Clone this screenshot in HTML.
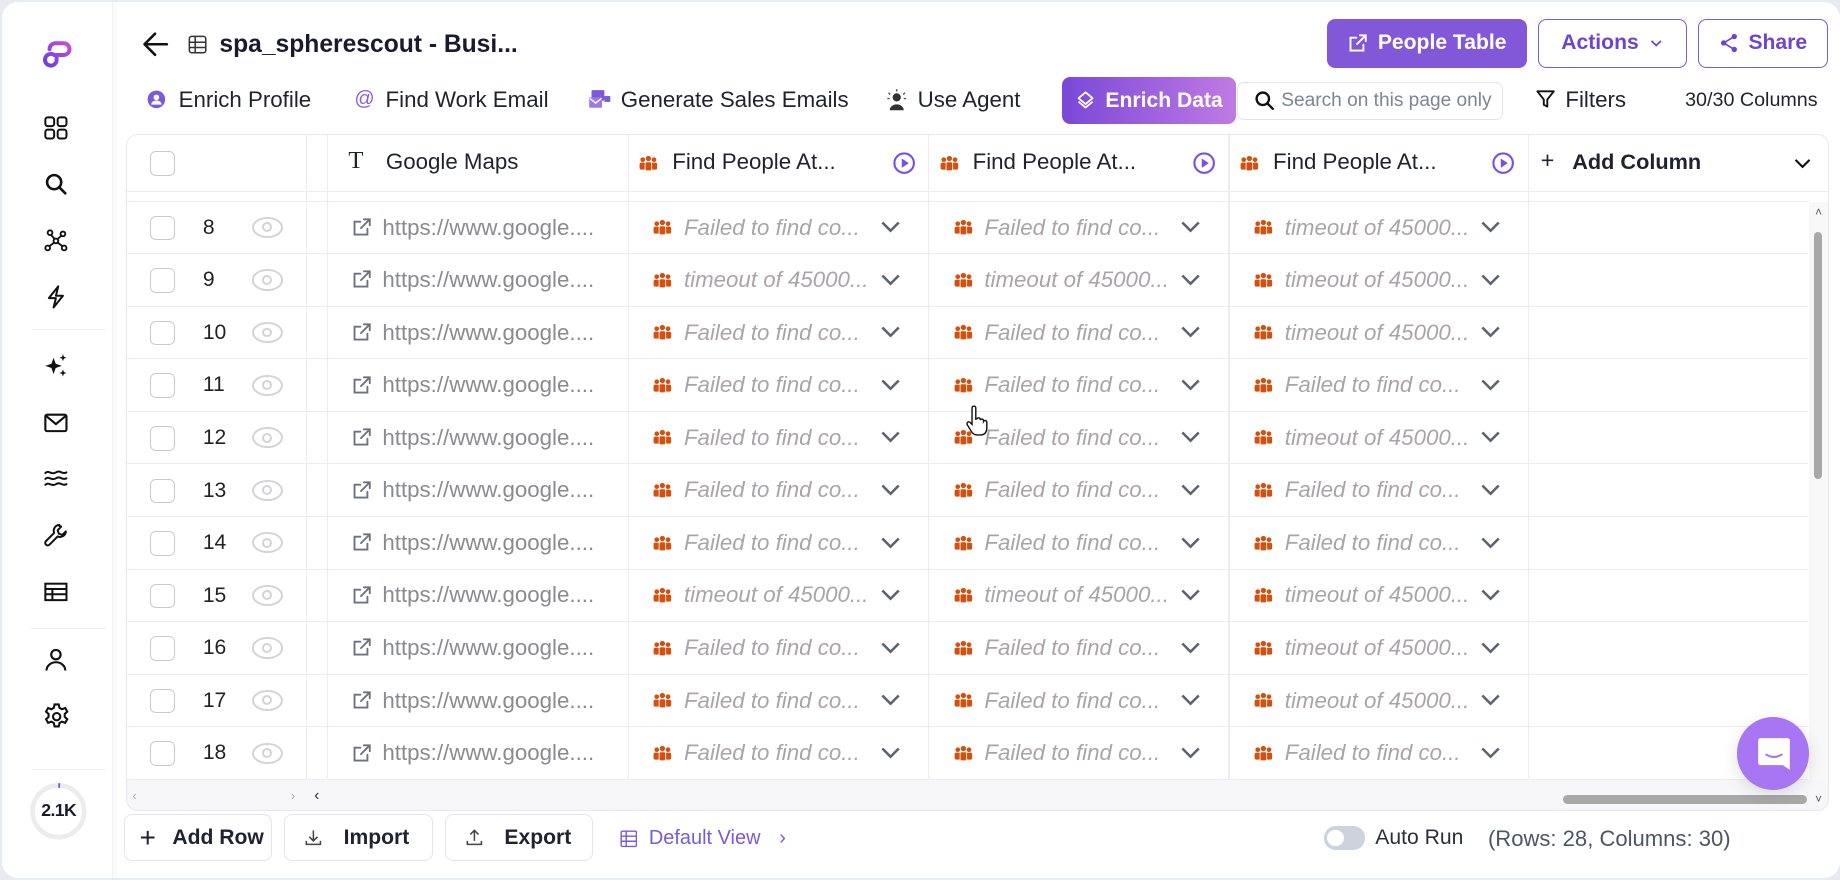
<!DOCTYPE html>
<html><head><meta charset="utf-8"><style>
html{zoom:1.173469}
*{box-sizing:border-box;margin:0;padding:0}
body{width:1568px;height:750px;overflow:hidden;background:#e6ebf2;font-family:"Liberation Sans",sans-serif;color:#1a1a2e;position:relative}
.card{position:absolute;left:2px;top:2px;width:1566px;height:746px;background:#fff;border-radius:14px;overflow:hidden}
.side{position:absolute;left:0;top:0;width:94px;height:760px;background:#fff;box-shadow:2px 0 6px rgba(0,0,0,.04);border-right:1px solid #f1f2f5}
.a{position:absolute}
.si{position:absolute;left:35px;width:22px;height:22px}
.sep{position:absolute;left:24px;width:64px;height:1px;background:#eef0f3}
.btn{position:absolute;border-radius:7px;font-size:18px;font-weight:bold;display:flex;align-items:center;justify-content:center;gap:8px}
.tb{position:absolute;top:72px;font-size:19px;color:#1f2330;display:flex;align-items:center;gap:8px}
.tbl{position:absolute;left:105px;top:112px;width:1452px;height:577px;border:1px solid #e6e6f4;border-radius:10px;overflow:hidden;background:#fff}
.vl{position:absolute;top:0;width:1px;height:550px;background:#ececf8}
.row{position:relative;width:1433px;height:44.8px;border-bottom:1px solid #ececf8}
.cb{position:absolute;left:20px;top:12px;width:21px;height:21px;border:1.5px solid #c9c9cf;border-radius:5px;background:#fff}
.num{position:absolute;left:65px;top:12px;font-size:18px;color:#222}
.eye{position:absolute;left:107px;top:13px;width:26px;height:18px;border:2px solid #d4d4d8;border-radius:50%/50%}
.eye:after{content:"";position:absolute;left:7px;top:3px;width:5px;height:5px;border:2px solid #d4d4d8;border-radius:50%}
.lk{position:absolute;left:191px;top:13px;width:18px;height:18px}
.url{position:absolute;left:218px;top:11px;font-size:19px;color:#8a8a92}
.pi{position:absolute;top:15px;width:16px;height:14px}
.ct{position:absolute;top:11px;font-size:19px;color:#aaa4a8;font-style:italic;white-space:nowrap}
.ch{position:absolute;top:15px;width:18px;height:14px}
.c1{left:449px}.c2{left:705px}.c3{left:961px}
.t1{left:475px}.t2{left:731px}.t3{left:987px}
.h1{left:642px}.h2{left:898px}.h3{left:1153px}
.hd{position:absolute;top:12px;font-size:19px;color:#1f2330}
.fb{position:absolute;top:692px;height:40px;border:1px solid #e4e4ee;border-radius:7px;font-size:18px;font-weight:bold;color:#1f2330;display:flex;align-items:center;gap:14px;padding-left:12px}
</style></head><body>
<svg width="0" height="0" style="position:absolute"><defs>
<symbol id="ppl" viewBox="0 0 16 14"><g fill="#d4500f"><circle cx="3.2" cy="4" r="2"/><circle cx="12.8" cy="4" r="2"/><circle cx="8" cy="3" r="2.3"/><rect x="0.5" y="6.5" width="5" height="6" rx="1.5"/><rect x="10.5" y="6.5" width="5" height="6" rx="1.5"/><rect x="5.2" y="5.8" width="5.6" height="7.7" rx="1.5" stroke="#fff" stroke-width="0.7"/></g></symbol>
<symbol id="chv" viewBox="0 0 18 14"><path d="M2 3l7 7 7-7" fill="none" stroke="#5b6270" stroke-width="2.2"/></symbol>
<symbol id="lnk" viewBox="0 0 18 18"><path d="M14 10v5H3V4h5M11 2h5v5M16 2L8.5 9.5" fill="none" stroke="#6b7280" stroke-width="1.6" stroke-linecap="round"/></symbol>
</defs></svg>
<div class="card">
<div class="side">
<svg class="a" style="left:31px;top:28px" width="32" height="32" viewBox="0 0 32 32"><defs><linearGradient id="lg" x1="0" y1="1" x2="1" y2="0"><stop offset="0" stop-color="#6a3de8"/><stop offset="1" stop-color="#c44fd8"/></linearGradient></defs><path d="M9 12 A5 5 0 0 1 14 7 H21 A5 5 0 0 1 21 17 H13 A5 5 0 1 0 15 22 L15 17" fill="none" stroke="url(#lg)" stroke-width="3.4" stroke-linecap="round"/></svg>
<svg class="si" style="top:96px" viewBox="0 0 22 22" fill="none" stroke="#111" stroke-width="1.7"><rect x="2" y="2" width="7.5" height="7.5" rx="2"/><rect x="12.5" y="2" width="7.5" height="7.5" rx="2"/><rect x="2" y="12.5" width="7.5" height="7.5" rx="2"/><rect x="12.5" y="12.5" width="7.5" height="7.5" rx="2"/></svg>
<svg class="si" style="top:144px" viewBox="0 0 22 22" fill="none" stroke="#111" stroke-width="2.2" stroke-linecap="round"><circle cx="9.5" cy="9.5" r="6"/><path d="M14 14l5 5"/></svg>
<svg class="si" style="top:192px" viewBox="0 0 22 22" fill="none" stroke="#111" stroke-width="1.6"><circle cx="4" cy="17" r="2"/><circle cx="18" cy="17" r="2"/><circle cx="6" cy="4" r="2"/><circle cx="17" cy="5" r="2"/><circle cx="11" cy="11" r="2"/><path d="M5.5 15.5L9.5 12.5M12.5 12.5l4 3M7 6l3 3.5M15.5 6.5l-3 3"/></svg>
<svg class="si" style="top:240px" viewBox="0 0 22 22" fill="none" stroke="#111" stroke-width="1.7" stroke-linejoin="round"><path d="M13 2L5 12h6l-2 8 8-10h-6z"/></svg>
<div class="sep" style="top:278px"></div>
<svg class="si" style="top:299px" viewBox="0 0 22 22" fill="#111"><path d="M9 4l1.8 5.2L16 11l-5.2 1.8L9 18l-1.8-5.2L2 11l5.2-1.8z"/><path d="M17 1l.8 2.2L20 4l-2.2.8L17 7l-.8-2.2L14 4l2.2-.8z"/><path d="M17 14l.8 2.2 2.2.8-2.2.8L17 20l-.8-2.2-2.2-.8 2.2-.8z"/></svg>
<svg class="si" style="top:347px" viewBox="0 0 22 22" fill="none" stroke="#111" stroke-width="1.8"><rect x="2" y="4" width="18" height="14" rx="1.5"/><path d="M2.5 5l8.5 7 8.5-7"/></svg>
<svg class="si" style="top:395px" viewBox="0 0 22 22" fill="none" stroke="#111" stroke-width="1.7" stroke-linecap="round"><path d="M2 6c3-3 5 2 9-0.5s5 2 9 0M2 11c3-3 5 2 9-0.5s5 2 9 0M2 16c3-3 5 2 9-0.5s5 2 9 0"/></svg>
<svg class="si" style="top:443px" viewBox="0 0 22 22" fill="none" stroke="#111" stroke-width="1.7" stroke-linejoin="round"><path d="M14 2.5a5 5 0 0 0-4.5 6.8L2.5 16.3a2 2 0 0 0 3 3l7-7A5 5 0 0 0 19.5 8l-3 3-3-1-1-3 3-3a5 5 0 0 0-1.5-.5z"/></svg>
<svg class="si" style="top:491px" viewBox="0 0 22 22" fill="none" stroke="#111" stroke-width="1.7"><rect x="2" y="4" width="18" height="14"/><path d="M2 8.5h18M2 13h18M8 8.5v9.5"/></svg>
<div class="sep" style="top:533px"></div>
<svg class="si" style="top:549px" viewBox="0 0 22 22" fill="none" stroke="#111" stroke-width="1.8"><circle cx="11" cy="6.5" r="4"/><path d="M3 20a8 7 0 0 1 16 0"/></svg>
<svg class="a" style="left:34px;top:596px" width="25" height="25" viewBox="0 0 24 24" fill="none" stroke="#111" stroke-width="1.7"><circle cx="12" cy="12" r="3"/><path d="M10.3 2h3.4l.6 2.8 2 1.1 2.7-1 1.7 3-2.1 1.9v2.4l2.1 1.9-1.7 3-2.7-1-2 1.1-.6 2.8h-3.4l-.6-2.8-2-1.1-2.7 1-1.7-3 2.1-1.9v-2.4L3.3 7.9l1.7-3 2.7 1 2-1.1z"/></svg>
<div class="sep" style="top:653px"></div>
<svg class="a" style="left:23px;top:664px" width="50" height="50" viewBox="0 0 50 50"><circle cx="25" cy="25" r="22" fill="none" stroke="#ececec" stroke-width="4"/><path d="M25 3 a22 22 0 0 1 1.5 .05" stroke="#7a4fe0" stroke-width="4" fill="none"/></svg>
<div class="a" style="left:23px;top:680px;width:50px;text-align:center;font-size:15px;font-weight:bold;letter-spacing:-.5px">2.1K</div>
</div>

<svg class="a" style="left:118px;top:23px" width="26" height="26" viewBox="0 0 26 26" fill="none" stroke="#111" stroke-width="2.2" stroke-linecap="round" stroke-linejoin="round"><path d="M22 13H4M12 4l-9 9 9 9"/></svg>
<svg class="a" style="left:157px;top:27px" width="18" height="18" viewBox="0 0 18 18" fill="none" stroke="#333" stroke-width="1.3"><rect x="2" y="2" width="14" height="14" rx="2"/><path d="M2 7h14M2 11.5h14M7 2v14"/></svg>
<div class="a" style="left:185px;top:24px;font-size:21px;font-weight:bold;color:#1a1a2e">spa_spherescout - Busi...</div>

<div class="btn" style="left:1129px;top:14px;width:170px;height:42px;background:#8258d8;color:#fff"><svg width="18" height="18" viewBox="0 0 18 18" fill="none" stroke="#fff" stroke-width="1.6" stroke-linecap="round"><path d="M14 10v5H3V4h5M11 2h5v5M16 2L8.5 9.5"/></svg>People Table</div>
<div class="btn" style="left:1309px;top:14px;width:127px;height:42px;border:1.3px solid #8258d8;color:#6e44cc;background:#fff">Actions <svg width="14" height="14" viewBox="0 0 14 14" fill="none" stroke="#6e44cc" stroke-width="1.5"><path d="M3 5l4 4 4-4"/></svg></div>
<div class="btn" style="left:1445px;top:14px;width:111px;height:42px;border:1.3px solid #8258d8;color:#6e44cc;background:#fff"><svg width="17" height="17" viewBox="0 0 17 17" fill="#6e44cc"><circle cx="13" cy="3" r="2.3"/><circle cx="4" cy="8.5" r="2.3"/><circle cx="13" cy="14" r="2.3"/><path d="M13 3L4 8.5 13 14" stroke="#6e44cc" stroke-width="1.4" fill="none"/></svg>Share</div>

<div class="tb" style="left:123px;gap:6px"><svg width="16" height="16" viewBox="0 0 16 16"><circle cx="8" cy="8" r="7.5" fill="#7a5ad8"/><circle cx="8" cy="6.3" r="2.4" fill="#fff"/><path d="M3.5 12.5a4.5 3.6 0 0 1 9 0" fill="#fff"/></svg>&nbsp;Enrich Profile</div>
<div class="tb" style="left:300px;gap:4px"><span style="color:#8a5ee0;font-size:17px">@</span>&nbsp;Find Work Email</div>
<div class="tb" style="left:499px;gap:8px"><svg width="20" height="18" viewBox="0 0 20 18"><rect x="3" y="1" width="11" height="9" rx="1" fill="#7a5ad8"/><rect x="1" y="7" width="11" height="9" rx="1" fill="#9b7ae8"/><path d="M1.5 8l5 4 5-4" stroke="#fff" stroke-width="1.2" fill="none"/><rect x="14" y="6" width="5" height="5" fill="#7a5ad8"/></svg>Generate Sales Emails</div>
<div class="tb" style="left:752px"><svg width="20" height="20" viewBox="0 0 20 20"><circle cx="10" cy="8" r="3.5" fill="#333"/><path d="M4 19a6 5 0 0 1 12 0z" fill="#333"/><path d="M10 1v2M3 4l1.5 1.5M17 4l-1.5 1.5M2 9h2M16 9h2" stroke="#555" stroke-width="1.2"/></svg>Use Agent</div>
<div class="btn" style="left:903px;top:64px;width:148px;height:40px;background:linear-gradient(90deg,#7a48d8,#c07ae2);color:#fff;border-radius:7px"><svg width="18" height="18" viewBox="0 0 18 18" fill="none" stroke="#fff" stroke-width="1.5" stroke-linejoin="round"><path d="M9 2l6 5-6 5-6-5z"/><path d="M3 10l6 5 6-5"/></svg>Enrich Data</div>
<div class="a" style="left:1052px;top:68px;width:227px;height:32px;border:1px solid #e3e3ec;border-radius:6px;display:flex;align-items:center;padding-left:14px;gap:5px;font-size:16.3px;color:#7b8594;white-space:nowrap"><svg width="18" height="18" viewBox="0 0 18 18" fill="none" stroke="#111" stroke-width="2" stroke-linecap="round"><circle cx="7.5" cy="7.5" r="5.3"/><path d="M11.5 11.5l4.5 4.5"/></svg>Search on this page only</div>
<div class="tb" style="left:1306px"><svg width="18" height="18" viewBox="0 0 18 18" fill="none" stroke="#111" stroke-width="1.6" stroke-linejoin="round"><path d="M2 2h14l-5.5 7v6l-3-1.5V9z"/></svg>Filters</div>
<div class="a" style="left:1434px;top:74px;font-size:16.8px;color:#1f2330">30/30 Columns</div>

<div class="tbl">
 <div class="a" style="left:0;top:0;width:1452px;height:49px;border-bottom:1px solid #ececf8;background:#fff"></div>
 <div class="vl" style="left:153px"></div><div class="vl" style="left:171px"></div><div class="vl" style="left:427px"></div><div class="vl" style="left:683px"></div><div class="vl" style="left:939px"></div><div class="vl" style="left:1194px"></div>
 <div class="a" style="left:20px;top:14px;width:21px;height:21px;border:1.5px solid #c9c9cf;border-radius:5px"></div>
 <div class="hd" style="left:189px;font-family:'Liberation Serif',serif;font-size:21px;top:10px">T</div>
 <div class="hd" style="left:221px">Google Maps</div>
 <svg class="a" style="left:437px;top:17px" width="16" height="14"><use href="#ppl"/></svg>
 <div class="hd" style="left:465px">Find People At...</div>
 <svg class="a" style="left:653px;top:15px" width="19" height="19" viewBox="0 0 19 19"><circle cx="9.5" cy="9.5" r="8.3" fill="none" stroke="#7a4fe0" stroke-width="1.8"/><path d="M7.5 5.5v8l6-4z" fill="#7a4fe0"/></svg>
 <svg class="a" style="left:693px;top:17px" width="16" height="14"><use href="#ppl"/></svg>
 <div class="hd" style="left:721px">Find People At...</div>
 <svg class="a" style="left:909px;top:15px" width="19" height="19" viewBox="0 0 19 19"><circle cx="9.5" cy="9.5" r="8.3" fill="none" stroke="#7a4fe0" stroke-width="1.8"/><path d="M7.5 5.5v8l6-4z" fill="#7a4fe0"/></svg>
 <svg class="a" style="left:949px;top:17px" width="16" height="14"><use href="#ppl"/></svg>
 <div class="hd" style="left:977px">Find People At...</div>
 <svg class="a" style="left:1164px;top:15px" width="19" height="19" viewBox="0 0 19 19"><circle cx="9.5" cy="9.5" r="8.3" fill="none" stroke="#7a4fe0" stroke-width="1.8"/><path d="M7.5 5.5v8l6-4z" fill="#7a4fe0"/></svg>
 <div class="hd" style="left:1205px;font-size:20px;top:10px">+</div>
 <div class="hd" style="left:1232px;font-weight:bold;font-size:18.5px">Add Column</div>
 <svg class="a" style="left:1419px;top:16px" width="18" height="16" viewBox="0 0 18 16" fill="none" stroke="#111" stroke-width="1.8"><path d="M3 5l6 6 6-6"/></svg>
 <div class="a" style="left:0;top:49px;width:1433px;height:8px;border-bottom:1px solid #ececf8"></div>

 <div class="a" style="left:0;top:57px;width:1433px">
  <div class="row"><div class="cb"></div><div class="num">8</div><div class="eye"></div><svg class="lk"><use href="#lnk"/></svg><div class="url">https://www.google....</div>
   <svg class="pi c1"><use href="#ppl"/></svg><div class="ct t1">Failed to find co...</div><svg class="ch h1"><use href="#chv"/></svg>
   <svg class="pi c2"><use href="#ppl"/></svg><div class="ct t2">Failed to find co...</div><svg class="ch h2"><use href="#chv"/></svg>
   <svg class="pi c3"><use href="#ppl"/></svg><div class="ct t3">timeout of 45000...</div><svg class="ch h3"><use href="#chv"/></svg></div>
  <div class="row"><div class="cb"></div><div class="num">9</div><div class="eye"></div><svg class="lk"><use href="#lnk"/></svg><div class="url">https://www.google....</div>
   <svg class="pi c1"><use href="#ppl"/></svg><div class="ct t1">timeout of 45000...</div><svg class="ch h1"><use href="#chv"/></svg>
   <svg class="pi c2"><use href="#ppl"/></svg><div class="ct t2">timeout of 45000...</div><svg class="ch h2"><use href="#chv"/></svg>
   <svg class="pi c3"><use href="#ppl"/></svg><div class="ct t3">timeout of 45000...</div><svg class="ch h3"><use href="#chv"/></svg></div>
  <div class="row"><div class="cb"></div><div class="num">10</div><div class="eye"></div><svg class="lk"><use href="#lnk"/></svg><div class="url">https://www.google....</div>
   <svg class="pi c1"><use href="#ppl"/></svg><div class="ct t1">Failed to find co...</div><svg class="ch h1"><use href="#chv"/></svg>
   <svg class="pi c2"><use href="#ppl"/></svg><div class="ct t2">Failed to find co...</div><svg class="ch h2"><use href="#chv"/></svg>
   <svg class="pi c3"><use href="#ppl"/></svg><div class="ct t3">timeout of 45000...</div><svg class="ch h3"><use href="#chv"/></svg></div>
  <div class="row"><div class="cb"></div><div class="num">11</div><div class="eye"></div><svg class="lk"><use href="#lnk"/></svg><div class="url">https://www.google....</div>
   <svg class="pi c1"><use href="#ppl"/></svg><div class="ct t1">Failed to find co...</div><svg class="ch h1"><use href="#chv"/></svg>
   <svg class="pi c2"><use href="#ppl"/></svg><div class="ct t2">Failed to find co...</div><svg class="ch h2"><use href="#chv"/></svg>
   <svg class="pi c3"><use href="#ppl"/></svg><div class="ct t3">Failed to find co...</div><svg class="ch h3"><use href="#chv"/></svg></div>
  <div class="row"><div class="cb"></div><div class="num">12</div><div class="eye"></div><svg class="lk"><use href="#lnk"/></svg><div class="url">https://www.google....</div>
   <svg class="pi c1"><use href="#ppl"/></svg><div class="ct t1">Failed to find co...</div><svg class="ch h1"><use href="#chv"/></svg>
   <svg class="pi c2"><use href="#ppl"/></svg><div class="ct t2">Failed to find co...</div><svg class="ch h2"><use href="#chv"/></svg>
   <svg class="pi c3"><use href="#ppl"/></svg><div class="ct t3">timeout of 45000...</div><svg class="ch h3"><use href="#chv"/></svg></div>
  <div class="row"><div class="cb"></div><div class="num">13</div><div class="eye"></div><svg class="lk"><use href="#lnk"/></svg><div class="url">https://www.google....</div>
   <svg class="pi c1"><use href="#ppl"/></svg><div class="ct t1">Failed to find co...</div><svg class="ch h1"><use href="#chv"/></svg>
   <svg class="pi c2"><use href="#ppl"/></svg><div class="ct t2">Failed to find co...</div><svg class="ch h2"><use href="#chv"/></svg>
   <svg class="pi c3"><use href="#ppl"/></svg><div class="ct t3">Failed to find co...</div><svg class="ch h3"><use href="#chv"/></svg></div>
  <div class="row"><div class="cb"></div><div class="num">14</div><div class="eye"></div><svg class="lk"><use href="#lnk"/></svg><div class="url">https://www.google....</div>
   <svg class="pi c1"><use href="#ppl"/></svg><div class="ct t1">Failed to find co...</div><svg class="ch h1"><use href="#chv"/></svg>
   <svg class="pi c2"><use href="#ppl"/></svg><div class="ct t2">Failed to find co...</div><svg class="ch h2"><use href="#chv"/></svg>
   <svg class="pi c3"><use href="#ppl"/></svg><div class="ct t3">Failed to find co...</div><svg class="ch h3"><use href="#chv"/></svg></div>
  <div class="row"><div class="cb"></div><div class="num">15</div><div class="eye"></div><svg class="lk"><use href="#lnk"/></svg><div class="url">https://www.google....</div>
   <svg class="pi c1"><use href="#ppl"/></svg><div class="ct t1">timeout of 45000...</div><svg class="ch h1"><use href="#chv"/></svg>
   <svg class="pi c2"><use href="#ppl"/></svg><div class="ct t2">timeout of 45000...</div><svg class="ch h2"><use href="#chv"/></svg>
   <svg class="pi c3"><use href="#ppl"/></svg><div class="ct t3">timeout of 45000...</div><svg class="ch h3"><use href="#chv"/></svg></div>
  <div class="row"><div class="cb"></div><div class="num">16</div><div class="eye"></div><svg class="lk"><use href="#lnk"/></svg><div class="url">https://www.google....</div>
   <svg class="pi c1"><use href="#ppl"/></svg><div class="ct t1">Failed to find co...</div><svg class="ch h1"><use href="#chv"/></svg>
   <svg class="pi c2"><use href="#ppl"/></svg><div class="ct t2">Failed to find co...</div><svg class="ch h2"><use href="#chv"/></svg>
   <svg class="pi c3"><use href="#ppl"/></svg><div class="ct t3">timeout of 45000...</div><svg class="ch h3"><use href="#chv"/></svg></div>
  <div class="row"><div class="cb"></div><div class="num">17</div><div class="eye"></div><svg class="lk"><use href="#lnk"/></svg><div class="url">https://www.google....</div>
   <svg class="pi c1"><use href="#ppl"/></svg><div class="ct t1">Failed to find co...</div><svg class="ch h1"><use href="#chv"/></svg>
   <svg class="pi c2"><use href="#ppl"/></svg><div class="ct t2">Failed to find co...</div><svg class="ch h2"><use href="#chv"/></svg>
   <svg class="pi c3"><use href="#ppl"/></svg><div class="ct t3">timeout of 45000...</div><svg class="ch h3"><use href="#chv"/></svg></div>
  <div class="row"><div class="cb"></div><div class="num">18</div><div class="eye"></div><svg class="lk"><use href="#lnk"/></svg><div class="url">https://www.google....</div>
   <svg class="pi c1"><use href="#ppl"/></svg><div class="ct t1">Failed to find co...</div><svg class="ch h1"><use href="#chv"/></svg>
   <svg class="pi c2"><use href="#ppl"/></svg><div class="ct t2">Failed to find co...</div><svg class="ch h2"><use href="#chv"/></svg>
   <svg class="pi c3"><use href="#ppl"/></svg><div class="ct t3">Failed to find co...</div><svg class="ch h3"><use href="#chv"/></svg></div>
 </div>
 <div class="a" style="left:0;top:550px;width:1452px;height:27px;background:#f7f7f9"></div>
 <div class="a" style="left:5px;top:557px;font-size:11px;color:#aaa">‹</div>
 <div class="a" style="left:140px;top:557px;font-size:11px;color:#aaa">›</div>
 <div class="a" style="left:160px;top:556px;font-size:13px;color:#333">‹</div>
 <div class="a" style="left:1224px;top:563px;width:208px;height:7px;border-radius:4px;background:#a8a8a8"></div>
 <div class="a" style="left:1434px;top:57px;width:18px;height:493px;background:#f8f8f8"></div>
 <div class="a" style="left:1438px;top:83px;width:7px;height:210px;border-radius:4px;background:#a8a8a8"></div>
 <div class="a" style="left:1439px;top:61px;font-size:10px;color:#555">˄</div>
 <div class="a" style="left:1439px;top:561px;font-size:10px;color:#555">˅</div>
</div>

<div class="fb" style="left:104px;width:126px"><span style="font-size:24px;font-weight:normal">+</span>Add Row</div>
<div class="fb" style="left:240px;width:127px;padding-left:16px;gap:18px"><svg width="16" height="16" viewBox="0 0 16 16" fill="none" stroke="#444" stroke-width="1.3"><path d="M8 2v9M4.5 7.5L8 11l3.5-3.5M2 11v3h12v-3"/></svg>Import</div>
<div class="fb" style="left:377px;width:126px;padding-left:16px;gap:18px"><svg width="16" height="16" viewBox="0 0 16 16" fill="none" stroke="#444" stroke-width="1.3"><path d="M8 11V2M4.5 5.5L8 2l3.5 3.5M2 11v3h12v-3"/></svg>Export</div>
<div class="a" style="left:526px;top:703px;display:flex;align-items:center;gap:10px;font-size:17px;color:#7a5ad8"><svg width="15" height="15" viewBox="0 0 15 15" fill="none" stroke="#7a5ad8" stroke-width="1.2"><rect x="1" y="1" width="13" height="13" rx="1"/><path d="M1 5.3h13M1 9.6h13M5.3 1v13"/></svg>Default View <span style="margin-left:6px">›</span></div>
<div class="a" style="left:1126px;top:702px;width:35px;height:20px;border-radius:10px;background:#cdd3de"><div class="a" style="left:3px;top:3px;width:14px;height:14px;border-radius:50%;background:#fff"></div></div>
<div class="a" style="left:1170px;top:702px;font-size:18px;color:#2b2f3a">Auto Run</div>
<div class="a" style="left:1266px;top:702px;font-size:18.8px;color:#4b5565">(Rows: 28, Columns: 30)</div>

<div class="a" style="left:1478px;top:609px;width:62px;height:62px;border-radius:50%;background:#a875f3;box-shadow:0 4px 14px rgba(0,0,0,.12)"><svg class="a" style="left:17px;top:17px" width="29" height="29" viewBox="0 0 29 29"><path d="M3 1h23a2 2 0 0 1 2 2v25l-6-4H3a2 2 0 0 1-2-2V3a2 2 0 0 1 2-2z" fill="#fff"/><path d="M8 15q6.5 4 13 0" stroke="#a875f3" stroke-width="1.8" fill="none" stroke-linecap="round"/></svg></div>
<svg class="a" style="left:820px;top:343px" width="20" height="28" viewBox="0 0 20 28"><path d="M6 2.5a1.6 1.6 0 0 1 3.2 0V12l1-.3a1.5 1.5 0 0 1 2.8.6v.5a1.5 1.5 0 0 1 2.8.5v.7a1.5 1.5 0 0 1 2.8.6V20c0 3-2 5.5-5 5.5H10c-2 0-3.3-1-4.5-2.8L2 17a1.6 1.6 0 0 1 2.5-2L6 16.5z" fill="#fff" stroke="#111" stroke-width="1.2"/></svg>
</div>
</body></html>
